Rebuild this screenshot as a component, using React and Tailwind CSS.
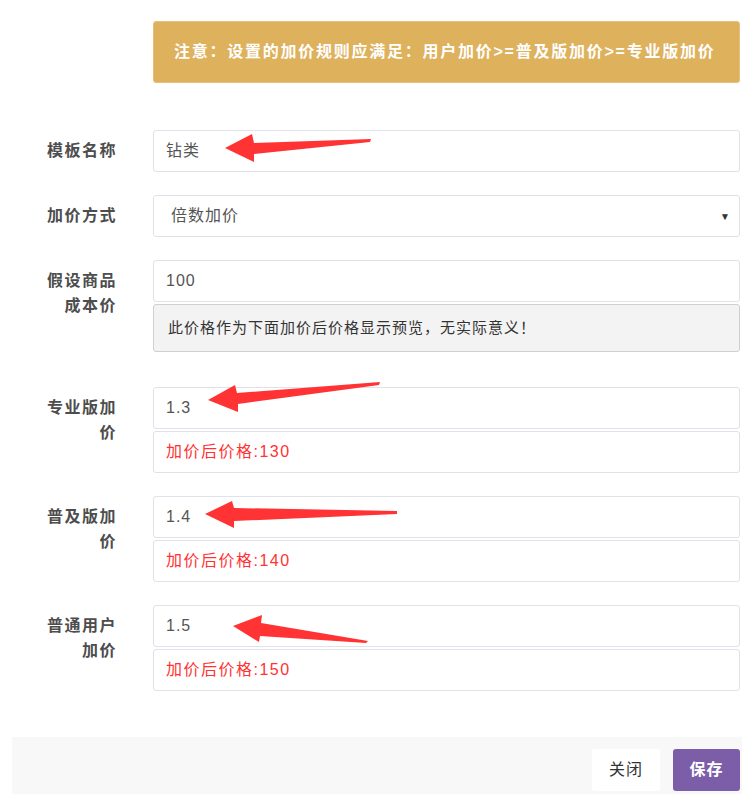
import React from "react";

const FONT = { fontFamily: '"Liberation Sans","Noto Sans CJK SC",sans-serif' };

function Label({ children }) {
  return (
    <div className="w-[153px] shrink-0">
      <div className="w-[117px] pl-[45px] pt-[8px] text-right text-[16px] leading-[25px] font-bold tracking-[1.5px] text-[#4d4d4d]">
        {children}
      </div>
    </div>
  );
}

function Box({ children, className = "" }) {
  return (
    <div
      className={
        "h-[42px] flex items-center border border-[#e1e1ea] rounded-[3px] bg-white px-[12px] text-[16px] " +
        className
      }
    >
      {children}
    </div>
  );
}

function PriceRow({ label, value, result, className = "" }) {
  return (
    <div className={"flex " + className}>
      <Label>{label}</Label>
      <div className="flex-1 flex flex-col gap-[2px]">
        <Box className="text-[#555] tracking-[1px]">{value}</Box>
        <Box className="text-[#ff3333] tracking-[1.5px]">加价后价格:{result}</Box>
      </div>
    </div>
  );
}

export default function App() {
  return (
    <div className="relative w-[742px] h-[794px] bg-white overflow-hidden" style={FONT}>
      <div className="pl-[153px] pr-[2px] pt-[21px]">
        <div className="h-[62px] flex items-center rounded-[3px] bg-[#deb15d] border border-[#e6c07a] px-[20px] text-white font-bold text-[16px] tracking-[1.75px]">
          注意：设置的加价规则应满足：用户加价&gt;=普及版加价&gt;=专业版加价
        </div>
      </div>

      <div className="pr-[2px] mt-[47px] flex flex-col">
        <div className="flex">
          <Label>模板名称</Label>
          <div className="flex-1">
            <Box className="text-[#555] tracking-[1px]">钻类</Box>
          </div>
        </div>

        <div className="flex mt-[23px]">
          <Label>加价方式</Label>
          <div className="flex-1">
            <Box className="text-[#555] tracking-[1px] justify-between pl-[17px] pr-[8px]">
              <span>倍数加价</span>
              <span className="text-[10px] text-[#333]">▼</span>
            </Box>
          </div>
        </div>

        <div className="flex mt-[23px]">
          <Label>假设商品成本价</Label>
          <div className="flex-1 flex flex-col gap-[2px]">
            <Box className="text-[#555] tracking-[1px]">100</Box>
            <div className="h-[48px] flex items-center rounded-[3px] border border-[#cfcfcf] bg-[#f3f3f3] px-[14px] text-[15px] tracking-[1px] text-[#333]">
              此价格作为下面加价后价格显示预览，无实际意义！
            </div>
          </div>
        </div>

        <PriceRow className="mt-[35px]" label="专业版加价" value="1.3" result="130" />
        <PriceRow className="mt-[23px]" label="普及版加价" value="1.4" result="140" />
        <PriceRow className="mt-[23px]" label="普通用户加价" value="1.5" result="150" />
      </div>

      <div className="mt-[46px] ml-[12px] h-[60px] bg-[#f8f8f8] flex justify-end items-start pt-[12px] pr-[2px] gap-[13px]">
        <button className="w-[68px] h-[42px] rounded-[3px] bg-white text-[#333] text-[16px] tracking-[1px]">
          关闭
        </button>
        <button className="w-[67px] h-[42px] rounded-[3px] bg-[#7b5ea7] text-white font-bold text-[16px] tracking-[1px]">
          保存
        </button>
      </div>

      <svg
        className="absolute top-0 left-0 pointer-events-none"
        width="742"
        height="794"
        viewBox="0 0 742 794"
      >
        <g fill="#ff3333">
          <polygon points="225,148 252,134 254,143 371,139 370,142 254,154 254,162" />
          <polygon points="208,400 235,385 237,393 380,382 379,385 238,404 238,412" />
          <polygon points="205,514 232,501 234,508 397,511 397,514 234,521 234,528" />
          <polygon points="233,626 262,615 261,623 368,641 366,643 260,636 259,642" />
        </g>
      </svg>
    </div>
  );
}
